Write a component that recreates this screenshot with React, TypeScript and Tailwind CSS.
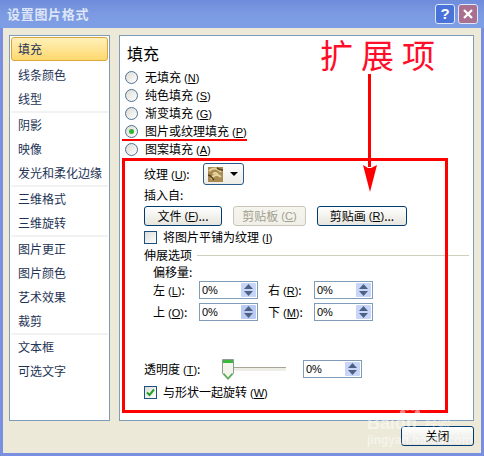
import React from "react";

const sideGroups = [
  ["填充", "线条颜色", "线型"],
  ["阴影", "映像", "发光和柔化边缘"],
  ["三维格式", "三维旋转"],
  ["图片更正", "图片颜色", "艺术效果", "裁剪"],
  ["文本框", "可选文字"],
];

const fills = [
  { label: "无填充", key: "N" },
  { label: "纯色填充", key: "S" },
  { label: "渐变填充", key: "G" },
  { label: "图片或纹理填充", key: "P", checked: true },
  { label: "图案填充", key: "A" },
];

const Hot = ({ k }: { k: string }) => (
  <span className="ml-[3px] font-['Liberation_Sans',sans-serif] text-[11px]">
    (<span className="underline">{k}</span>)
  </span>
);

const Radio = ({ checked }: { checked?: boolean }) => (
  <span className="flex h-[13px] w-[13px] shrink-0 items-center justify-center rounded-full border border-[#4a7296] bg-gradient-to-br from-[#dcdbd3] to-white">
    {checked && <span className="h-[5px] w-[5px] rounded-full bg-[#2fb52f]" />}
  </span>
);

const Spin = ({ active }: { active?: boolean }) => (
  <div className="flex h-[18px] w-[59px] items-center justify-between border border-[#7f9db9] bg-white pl-[2px] pr-[1px]">
    <span className="font-['Liberation_Sans',sans-serif] text-[11px]">0%</span>
    <span className={`flex h-[14px] w-[15px] flex-col items-center justify-center gap-[2px] rounded-[1px] ${active ? "bg-[#b9cbf4]" : "bg-[#c6d5f8]"}`}>
      <svg width="9" height="5" viewBox="0 0 9 5"><path d="M4.5 0 9 5H0z" fill="#4d6185" /></svg>
      <svg width="9" height="5" viewBox="0 0 9 5"><path d="M4.5 5 9 0H0z" fill="#4d6185" /></svg>
    </span>
  </div>
);

const Btn = ({ className, disabled, children }: { className: string; disabled?: boolean; children: React.ReactNode }) => (
  <div
    className={`flex h-[20px] items-center justify-center rounded-[3px] border bg-gradient-to-b ${
      disabled
        ? "border-[#c9c7ba] from-[#f5f4ee] to-[#f0efe8] text-[#a19f8f]"
        : "border-[#003c74] from-white to-[#e6e5dd] text-black"
    } ${className}`}
  >
    {children}
  </div>
);

const Check = ({ checked }: { checked?: boolean }) => (
  <span className="flex h-[13px] w-[13px] shrink-0 items-center justify-center border border-[#1c5180] bg-gradient-to-br from-[#dcdcd7] to-white">
    {checked && (
      <svg width="9" height="9" viewBox="0 0 9 9">
        <path d="M1 4.5 3.5 7 8 1.5" fill="none" stroke="#21a121" strokeWidth="2" />
      </svg>
    )}
  </span>
);

export default function App() {
  return (
    <div className="relative flex h-[456px] w-[484px] flex-col overflow-hidden bg-[#7b8fe0] font-['Noto_Sans_CJK_SC',sans-serif] text-[12px] text-black">
      {/* Title bar */}
      <div className="flex h-[28px] shrink-0 items-center justify-between bg-gradient-to-b from-[#6f8cdc] via-[#7c9ae2] to-[#7d9fe6] pl-[7px] pr-[6px]">
        <span className="text-[13px] font-bold tracking-[0.7px] text-[#dde5f6]">设置图片格式</span>
        <div className="flex gap-[3px]">
          <div className="flex h-[20px] w-[20px] items-center justify-center rounded-[3px] border border-[#dfe7fa] bg-[#4a73da] font-['Liberation_Sans',sans-serif] text-[15px] font-bold text-white">?</div>
          <div className="flex h-[20px] w-[20px] items-center justify-center rounded-[3px] border border-[#dfe7fa] bg-[#a9708f]">
            <svg width="12" height="12" viewBox="0 0 12 12">
              <path d="M2 2l8 8M10 2l-8 8" stroke="#fff" strokeWidth="2.2" />
            </svg>
          </div>
        </div>
      </div>

      {/* Dialog body */}
      <div className="mx-[3px] mb-[3px] flex min-h-0 flex-1 flex-col bg-[#ece9d8] px-[6px] pt-[7px]">
        <div className="flex h-[386px] gap-[9px] pr-[1px]">
          {/* Side list */}
          <div className="w-[101px] border border-[#7f9db9] bg-white px-[1px] pt-[1px]">
            {sideGroups.map((group, g) => (
              <div key={g}>
                {g > 0 && <div className="h-[2px] bg-[#f2f2f2]" />}
                {group.map((item, i) =>
                  g === 0 && i === 0 ? (
                    <div
                      key={item}
                      className="mb-[2px] flex h-[24px] items-center rounded-[3px] border border-[#d8a63c] bg-gradient-to-b from-[#fff0b8] to-[#fdd86c] pl-[6px] text-[#1e3456]"
                    >
                      {item}
                    </div>
                  ) : (
                    <div key={item} className="flex h-[24px] items-center whitespace-nowrap pl-[7px] text-[#1e3456]">
                      {item}
                    </div>
                  )
                )}
              </div>
            ))}
          </div>

          {/* Fill panel */}
          <div className="flex-1 border border-[#7f9db9] bg-white pl-[5px] text-black">
            <div className="flex h-[32px] items-center pl-[2px] pt-[2px] text-[16px] leading-none">填充</div>
            {fills.map((f) => (
              <div key={f.key} className="flex h-[18px] items-center gap-[7px] whitespace-nowrap">
                <Radio checked={f.checked} />
                <span>
                  {f.label}
                  <Hot k={f.key} />
                </span>
              </div>
            ))}

            <div className="pl-[19px]">
              <div className="mt-[5px] flex h-[22px] items-center">
                <span className="w-[59px] whitespace-nowrap">
                  纹理<Hot k="U" />:
                </span>
                <div className="flex h-[22px] w-[41px] items-center gap-[7px] rounded-[3px] border border-[#2a5a8c] bg-gradient-to-b from-white to-[#ecebe4] pl-[4px]">
                  <svg width="15" height="15" viewBox="0 0 15 15">
                    <rect width="15" height="15" fill="#a98b52" />
                    <path d="M1 4c4-4 9-3 12 1M3 12c3-5 7-5 10-2M5 7c2-2 4-1 5 1" fill="none" stroke="#e6d39c" strokeWidth="2" />
                    <path d="M0 8c3 0 4 3 6 5M9 1c2 2 4 2 6 2" fill="none" stroke="#57421f" strokeWidth="1.5" />
                  </svg>
                  <svg width="8" height="4" viewBox="0 0 8 4"><path d="M0 0h8L4 4z" fill="#000" /></svg>
                </div>
              </div>

              <div className="mt-[1px] flex h-[18px] items-center">插入自:</div>

              <div className="mt-[2px] flex">
                <Btn className="w-[78px]">
                  文件<Hot k="F" />...
                </Btn>
                <Btn disabled className="ml-[11px] w-[73px]">
                  剪贴板<Hot k="C" />
                </Btn>
                <Btn className="ml-[11px] w-[90px]">
                  剪贴画<Hot k="R" />...
                </Btn>
              </div>

              <div className="mt-[1px] flex h-[20px] items-center gap-[6px]">
                <Check />
                <span>
                  将图片平铺为纹理<Hot k="I" />
                </span>
              </div>

              <div className="flex h-[16px] items-center gap-[5px] pr-[4px]">
                <span className="whitespace-nowrap">伸展选项</span>
                <div className="h-[1px] flex-1 bg-[#d0d0bf]" />
              </div>

              <div className="flex h-[18px] items-center pl-[9px]">偏移量:</div>

              <div className="flex h-[18px] items-center pl-[9px]">
                <span className="w-[46px] whitespace-nowrap">左<Hot k="L" />:</span>
                <Spin />
                <span className="ml-[10px] w-[46px] whitespace-nowrap">右<Hot k="R" />:</span>
                <Spin />
              </div>
              <div className="mt-[4px] flex h-[18px] items-center pl-[9px]">
                <span className="w-[46px] whitespace-nowrap">上<Hot k="O" />:</span>
                <Spin active />
                <span className="ml-[10px] w-[46px] whitespace-nowrap">下<Hot k="M" />:</span>
                <Spin />
              </div>

              <div className="mt-[39px] flex h-[18px] items-center">
                <span className="w-[78px] whitespace-nowrap">透明度<Hot k="T" />:</span>
                <svg width="12" height="21" viewBox="0 0 12 21" className="shrink-0">
                  <path d="M.5.5h11v14L6 20.5.5 14.5z" fill="#f4f3ec" stroke="#8c9a90" />
                  <rect x="1" y="1" width="10" height="3" fill="#3cb83c" />
                  <path d="M1.5 14.5 6 19.5l4.500-5" fill="none" stroke="#54b054" strokeWidth="1.500" />
                </svg>
                <div className="h-[4px] w-[52px] border-t border-[#a8a596] bg-[#efeee6]" />
                <div className="ml-[17px]">
                  <Spin />
                </div>
              </div>

              <div className="mt-[7px] flex h-[14px] items-center gap-[6px]">
                <Check checked />
                <span>
                  与形状一起旋转<Hot k="W" />
                </span>
              </div>
            </div>
          </div>
        </div>

        {/* Footer */}
        <div className="flex justify-end pr-[1px] pt-[5px]">
          <Btn className="w-[73px]">关闭</Btn>
        </div>
      </div>

      {/* Red annotations over the dialog */}
      <div className="absolute left-[122px] top-[139px] h-[2px] w-[125px] bg-[#ff0000]" />
      <div className="absolute left-[122px] top-[158px] h-[255px] w-[326px] border-[3px] border-[#ff0000]" />
      <div className="absolute left-[320px] top-[33px] whitespace-nowrap text-[33px] leading-[42px] tracking-[8px] text-[#ff0e2a]">
        扩展项
      </div>
      <svg className="absolute left-[362px] top-[74px]" width="16" height="118" viewBox="0 0 16 118">
        <path d="M6 0h3v93H6z" fill="#ff0000" />
        <path d="M1 91 6 94h3l6-3-7 27z" fill="#ff0000" />
      </svg>

      {/* Watermark */}
      <div className="pointer-events-none absolute left-[367px] top-[403px] w-[88px] font-['Liberation_Sans',sans-serif] text-white/50">
        <svg className="-mb-[8px] ml-[31px]" width="24" height="20" viewBox="0 0 26 20" fill="currentColor">
          <ellipse cx="5" cy="10" rx="3" ry="3.500" />
          <ellipse cx="10" cy="4" rx="3" ry="3.500" />
          <ellipse cx="16" cy="4" rx="3" ry="3.500" />
          <ellipse cx="21" cy="10" rx="3" ry="3.500" />
          <ellipse cx="13" cy="15" rx="6" ry="4" />
        </svg>
        <div className="flex items-center whitespace-nowrap text-[18px] font-bold leading-[16px]">
          Baidu<span className="ml-[8px] font-['Noto_Sans_CJK_SC',sans-serif] text-[13px] font-normal">经验</span>
        </div>
        <div className="mt-[3px] whitespace-nowrap text-[12px] font-bold leading-[12px]">jingyan.baidu.com</div>
      </div>
    </div>
  );
}
